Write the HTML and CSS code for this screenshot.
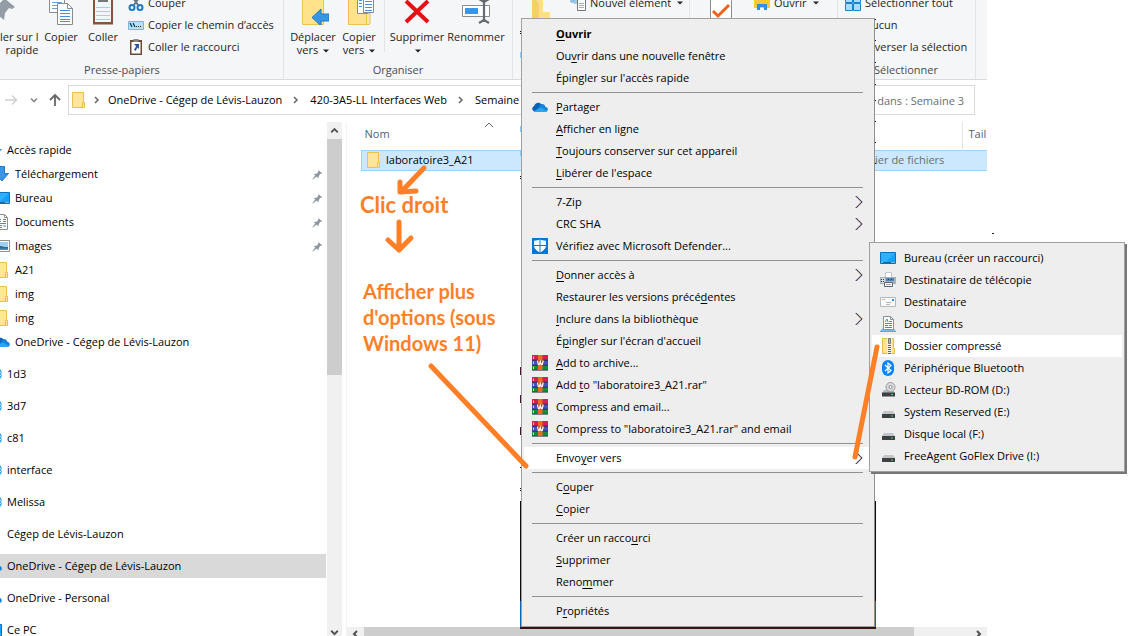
FILE: index.html
```html
<!DOCTYPE html>
<html lang="fr">
<head>
<meta charset="utf-8">
<title>Semaine 3</title>
<link rel="stylesheet" href="styles.css">
</head>
<body>
<svg class="defs" aria-hidden="true">
  <symbol id="folder" viewBox="0 0 16 16"><path d="M1.500.5h11v10h1v5h-12z" fill="#ffe69a" stroke="#ecc14a"/><path d="M11.500 15v-4.500h2V15.500" fill="#ffe9a8" stroke="#ecc14a"/></symbol>
  <symbol id="pin" viewBox="0 0 12 12"><path d="M7 1l4 3.500-1 1-1-.2L7.500 7.500 7 10 5 8.300 1 11.500.5 11 3.500 7.200 2 5.500l3-.4 2-2z" fill="#8e979f"/></symbol>
  <symbol id="cloud" viewBox="0 0 16 16"><path d="M3 12.500C0 12.500-.8 8.500 2 7.300 3 3.500 7 2.500 9.500 5.200L13 8l-3 5z" fill="#0f5fba"/><path d="M9 5c2.500-.5 4 1 4.300 2.800 3.300.6 3.400 4.700 0 5.200H3z" fill="#1484d8"/><path d="M2 12l7-3.500 6 3.500c-.5.700-1 1-2 1H3.500c-.7 0-1.200-.3-1.500-1z" fill="#2aa6ee"/></symbol>
  <symbol id="desktop" viewBox="0 0 16 16"><path d="M.5 2.500h15v11H.5z" fill="#16a1f8" stroke="#0d6fb5"/><path d="M1 3h14L5 13H1z" fill="#2db0ff"/><path d="M1 12.500h14" stroke="#0a6aa9"/><path d="M1.500 12.500h1M11.500 12.500h1M13.500 12.500h1" stroke="#fff"/></symbol>
  <symbol id="doc" viewBox="0 0 16 16"><path d="M2.500.5h8l3 3v12h-11z" fill="#fff" stroke="#8a9196"/><path d="M10.500.5v3h3" fill="none" stroke="#8a9196"/><path d="M4 5.500h3M9 5.500h3M4 7.500h3M9 7.500h3M4 9.500h8M4 11.500h4M9 12h3M4 13.500h4" stroke="#3d8fd0"/></symbol>
  <symbol id="picture" viewBox="0 0 16 16"><path d="M.5 2.500h15v11H.5z" fill="#fff" stroke="#8a9196"/><path d="M2 4h12v8H2z" fill="#9dd0f3"/><path d="M2 8c3-1 7 1 12 1v3H2z" fill="#2c6a86"/><path d="M2 10.500h12V12H2z" fill="#3f8ed0"/></symbol>
  <symbol id="down" viewBox="0 0 16 16"><path d="M5.500.5h5v7h4L8 15 1.500 7.500h4z" fill="#3a95e4" stroke="#2079c8"/></symbol>
  <symbol id="chev" viewBox="0 0 8 14"><path d="M.5 1l6 6-6 6" fill="none" stroke="#b0603c" stroke-width="1"/><path d="M1.200 1l6 6-6 6" fill="none" stroke="#24386e" stroke-width="1"/></symbol>
  <symbol id="crumb" viewBox="0 0 6 8"><path d="M1 1l3 3-3 3" fill="none" stroke="#6b6b6b" stroke-width="1.600"/></symbol>
  <symbol id="caret" viewBox="0 0 6 4"><path d="M0 .5h6L3 3.500z" fill="#222"/></symbol>
  <symbol id="rar" viewBox="0 0 16 16"><path d="M0 0h16v5H0z" fill="#cc2450"/><path d="M0 5h16v5H0z" fill="#4a4fb8"/><path d="M0 10h16v5H0z" fill="#188a3c"/><path d="M0 5.200h16M0 10.200h16M0 15.200h16" stroke="#232a3c" stroke-width=".8"/><path d="M1.500 1.500v2.500M1.500 6.500v2.500M1.500 11.500v2.500" stroke="#f7e31c"/><path d="M6 0h4.500v15H6z" fill="#ee6a1c"/><path d="M5.500 5.500l.8 4h1l1-3 1 3h1l.9-4" fill="#a83a16" stroke="#fff" stroke-width="1.200"/></symbol>
  <symbol id="shield" viewBox="0 0 16 16"><path d="M0 0h16v16H0z" fill="#0078d7"/><path d="M8 1.200l1 .8 5 .8v4.700c0 3-3 5.500-6 7-3-1.500-6-4-6-7V2.800L7 2z" fill="#fff"/><path d="M8 1v14M2 7.500h12" stroke="#0078d7"/></symbol>
  <symbol id="fax" viewBox="0 0 16 16"><path d="M5.500.5h6v5h-6z" fill="#fff" stroke="#c3c7cb"/><path d="M0 5h16v7H0z" fill="#a9b1b8"/><path d="M1 6h4v5H1z" fill="#d8dde2"/><path d="M6 6h8v3H6z" fill="#4a86bf"/><path d="M1 7.500h3M1 9.500h3M8 7.500h1M11 7.500h1" stroke="#313a44" stroke-dasharray="1 1"/><path d="M4.500 10.500h8v4h-8z" fill="#fff" stroke="#5c656d"/><path d="M6 12.500h5" stroke="#9aa2aa"/></symbol>
  <symbol id="mail" viewBox="0 0 16 16"><path d="M.5 3.500h15v9H.5z" fill="#fafafa" stroke="#b6b9bc"/><path d="M2 5.500h3M6 8.500h5M6 10.500h4" stroke="#b6b9bc"/><path d="M12 5h2v2h-2z" fill="#2e8fe0"/></symbol>
  <symbol id="docs2" viewBox="0 0 16 16"><path d="M0 15.500l2-3h12l2 3z" fill="#6fc3f2"/><path d="M3.500.5h7l3 3v10h-10z" fill="#fff" stroke="#8a9196"/><path d="M10.500.5v3h3" fill="none" stroke="#8a9196"/><path d="M5 6l2-3 1 3M9 5.500h3M5 7.500h7M5 9.500h3M9 9.500h3M5 11.500h7" fill="none" stroke="#3d8fd0"/><path d="M0 15.500h16" stroke="#4aaee8"/></symbol>
  <symbol id="zip" viewBox="0 0 16 16"><path d="M2.500.5h11v10h1v5h-12z" fill="#ffe48c" stroke="#e8bd3e"/><path d="M7 0h5v16H7z" fill="#f3eede"/><path d="M9.500 7v9" stroke="#666" stroke-width="3" stroke-dasharray="1 1"/><path d="M8.500.5h2v5h-2z" fill="#bbb" stroke="#777"/></symbol>
  <symbol id="bt" viewBox="0 0 16 16"><rect x="2" width="12" height="16" rx="6" fill="#0a84f5"/><path d="M5 5l6 5.500L8 13V3l3 2.500L5 11" fill="none" stroke="#fff" stroke-width="1.200"/></symbol>
  <symbol id="drive" viewBox="0 0 16 16"><path d="M4 7h9l2 3H2z" fill="#c3c6c8"/><path d="M2 10h13v4H2z" fill="#3c4043"/><path d="M11 12h2" stroke="#3fe05a"/></symbol>
  <symbol id="bdrom" viewBox="0 0 16 16"><path d="M4 8h9l2 3H2z" fill="#b3b7ba"/><circle cx="10.500" cy="5" r="4.500" fill="#d8dadc" stroke="#9a9ea1"/><circle cx="10.500" cy="5" r="1.500" fill="#fff" stroke="#85898c"/><path d="M2 10.500h13v4H2z" fill="#3c4043"/><path d="M11 12.500h2" stroke="#3fe05a"/></symbol>
  <symbol id="bubble" viewBox="0 0 16 16"><circle cx="8" cy="8" r="8" fill="#32a6ee"/><path d="M14 6l2 2-2 2" fill="none" stroke="#bfe3fa"/></symbol>
</svg>

<main class="explorer">
  <header class="ribbon">
    <section class="group clipboard">
      <div class="tools">
        <button class="big pinned"><svg viewBox="0 0 32 32"><path d="M20 5l11 9-3 2-3-1-4 5-1 7-6-5-7 5 5-8-6-6 8-1 5-5z" fill="#949da5"/></svg><span>ler sur l<br>rapide</span></button>
        <button class="big copy"><svg viewBox="0 0 32 32"><path d="M4.500-3.500h10l5 5v18h-15z" fill="#fff" stroke="#8b8b8b"/><path d="M7 9.500h10M7 12.500h10M7 15.500h10" stroke="#66a3e0"/><path d="M12.500 10.500h10l5 5v16h-15z" fill="#fff" stroke="#8b8b8b"/><path d="M22.500 10.500v5h5" fill="none" stroke="#8b8b8b"/><path d="M15 17.500h10M15 20.500h10M15 23.500h10M15 26.500h10M15 28.500h10" stroke="#4590de"/></svg><span>Copier</span></button>
        <button class="big paste"><svg viewBox="0 0 32 32"><path d="M6 3h20v28.500H6z" fill="#81563c"/><path d="M8 6h16v23H8z" fill="#eef7fb"/><path d="M11 3h10v6H11z" fill="#777"/><path d="M9 14.500h14M9 18.500h14M9 22.500h14M9 26.500h14" stroke="#9bd2ed"/></svg><span>Coller</span></button>
        <div class="rows">
          <button class="small"><svg viewBox="0 0 16 16"><path d="M3 0l7 10M13 0L6 10" stroke="#6d7780" stroke-width="2"/><circle cx="4" cy="12.500" r="2.500" fill="none" stroke="#1d79c4" stroke-width="2"/><circle cx="12" cy="12.500" r="2.500" fill="none" stroke="#1d79c4" stroke-width="2"/></svg>Couper</button>
          <button class="small"><svg viewBox="0 0 16 16"><path d="M.5 4.500h15v8H.5z" fill="#b6dff8" stroke="#7bb7de"/><path d="M2 6l2 4M5 6l2 4M8 9.500h1M10 9.500h1M12 9.500h1" stroke="#20303c" stroke-width="1.200"/></svg>Copier le chemin d’accès</button>
          <button class="small"><svg viewBox="0 0 16 16"><path d="M2 1h12v15H2z" fill="#6b4a36"/><path d="M3.500 3h9v11.500h-9z" fill="#fff"/><path d="M5.500 0h5v3h-5z" fill="#888"/><path d="M6 5h5v5L9.500 8.500 7.500 12 6 10.500l2.200-3.300z" fill="#27549b"/></svg>Coller le raccourci</button>
        </div>
      </div>
      <h2>Presse-papiers</h2>
    </section>
    <section class="group organise">
      <div class="tools">
        <button class="big move"><svg viewBox="0 0 32 32"><path d="M5.500 0h21v31.500h-21z" fill="#ffe28a" stroke="#eac250"/><path d="M32 21v7h-8v5l-9-8.500 9-8.500v5z" fill="#3796e6" stroke="#1f79c5"/></svg><span>Déplacer<br>vers <svg class="caret"><use href="#caret"/></svg></span></button>
        <button class="big copyto"><svg viewBox="0 0 32 32"><path d="M5.500 0h21v31.500h-21z" fill="#ffe28a" stroke="#eac250"/><path d="M23.500 31V20.500h3.500V31" fill="#ffe9a8" stroke="#eac250"/><path d="M14.500 3.500h10v17h-10z" fill="#fff" stroke="#8b8b8b"/><path d="M20.500 5.500h10v14h-10z" fill="#fff" stroke="#8b8b8b"/><path d="M16 7.500h3M16 10.500h3M16 13.500h3M22 8.500h7M22 11.500h7M22 14.500h7M22 17.500h7" stroke="#4590de"/></svg><span>Copier<br>vers <svg class="caret"><use href="#caret"/></svg></span></button>
        <i class="divider"></i>
        <button class="big remove"><svg viewBox="0 0 32 32"><path d="M5 8l22 21M27 8L5 29" stroke="#e60f14" stroke-width="4"/></svg><span>Supprimer<br><svg class="caret"><use href="#caret"/></svg></span></button>
        <button class="big rename"><svg viewBox="0 0 32 32"><path d="M2.500 12.500h27v11h-27z" fill="#fff" stroke="#878d93"/><path d="M5 15h13v6H5z" fill="#3796e6"/><path d="M24 7v22M19 30l5-3 5 3M19 6l5 3 5-3" fill="none" stroke="#666b70" stroke-width="2.200"/></svg><span>Renommer</span></button>
      </div>
      <h2>Organiser</h2>
    </section>
    <section class="group create">
      <div class="tools">
        <button class="big" aria-label="Nouveau dossier"><svg viewBox="0 0 32 32"><path d="M7 0h11v19h7v13H7z" fill="#ffdf86"/><path d="M7 0l7 12v20l-7-2z" fill="#f6cf67"/></svg></button>
        <div class="rows"><button class="small"><svg viewBox="0 0 16 16"><path d="M1 3v4h3M4 8h3M3 3v3h4" fill="none" stroke="#4a9ad4"/><path d="M7.500 3.500h8v12h-8z" fill="#fff" stroke="#777"/><path d="M9 8.500h5M9 10.500h5M9 12.500h5" stroke="#f09a6b"/></svg>Nouvel élément <svg class="caret"><use href="#caret"/></svg></button></div>
      </div>
    </section>
    <section class="group open">
      <div class="tools">
        <button class="big" aria-label="Propriétés"><svg viewBox="0 0 32 32"><path d="M5.500 2.500h16l5 5v24h-21z" fill="#fff" stroke="#8b8b8b"/><path d="M8 18l5 5 11-11" fill="none" stroke="#f0621c" stroke-width="3"/></svg></button>
        <div class="rows"><button class="small"><svg viewBox="0 0 16 16"><path d="M0 2h16v11H0z" fill="#fcc835"/><path d="M3 15V9h10v6h-3v-3H6v3z" fill="#2c8fe0"/></svg>Ouvrir <svg class="caret"><use href="#caret"/></svg></button></div>
      </div>
    </section>
    <section class="group select">
      <div class="tools">
        <div class="rows">
          <button class="small"><svg viewBox="0 0 16 16"><path d="M.5.500h7v7h-7zM8.500.500h7v7h-7zM.5 8.500h7v7h-7zM8.500 8.500h7v7h-7z" fill="#a9dbfa" stroke="#1583d0"/></svg>Sélectionner tout</button>
          <button class="small"><svg></svg>Aucun</button>
          <button class="small"><svg></svg>Inverser la sélection</button>
        </div>
      </div>
      <h2>Sélectionner</h2>
    </section>
  </header>

  <div class="location">
    <button class="navbtn fwd" aria-label="Suivant"><svg viewBox="0 0 16 16"><path d="M2 8h11M9 3.500L13.500 8 9 12.500" fill="none" stroke="#d0d0d0" stroke-width="1.500"/></svg></button>
    <button class="navbtn recent" aria-label="Récents"><svg viewBox="0 0 16 16"><path d="M5 6.500l3 3 3-3" fill="none" stroke="#888" stroke-width="1.600"/></svg></button>
    <button class="navbtn up" aria-label="Monter"><svg viewBox="0 0 16 16"><path d="M8 14V3M3 8l5-5 5 5" fill="none" stroke="#666" stroke-width="1.800"/></svg></button>
    <nav class="address" aria-label="Adresse">
      <svg class="icon"><use href="#folder"/></svg>
      <svg class="crumb first"><use href="#crumb"/></svg><a href="#">OneDrive - Cégep de Lévis-Lauzon</a>
      <svg class="crumb"><use href="#crumb"/></svg><a href="#">420-3A5-LL Interfaces Web</a>
      <svg class="crumb"><use href="#crumb"/></svg><a href="#">Semaine 3</a>
    </nav>
    <input class="search" type="text" aria-label="Rechercher" value="Rechercher dans : Semaine 3">
  </div>

  <div class="panes">
    <aside class="sidebar">
      <ul class="tree">
        <li class="root"><svg class="icon"><path d="M10 7h6l-4 5z" fill="#3a95e4"/></svg>Accès rapide</li>
        <li><svg class="icon"><use href="#down"/></svg>Téléchargement<svg class="pin"><use href="#pin"/></svg></li>
        <li><svg class="icon"><use href="#desktop"/></svg>Bureau<svg class="pin"><use href="#pin"/></svg></li>
        <li><svg class="icon"><use href="#doc"/></svg>Documents<svg class="pin"><use href="#pin"/></svg></li>
        <li><svg class="icon"><use href="#picture"/></svg>Images<svg class="pin"><use href="#pin"/></svg></li>
        <li><svg class="icon"><use href="#folder"/></svg>A21</li>
        <li><svg class="icon"><use href="#folder"/></svg>img</li>
        <li><svg class="icon"><use href="#folder"/></svg>img</li>
        <li><svg class="icon"><use href="#cloud"/></svg>OneDrive - Cégep de Lévis-Lauzon</li>
        <li class="root spaced"><svg class="icon"><use href="#bubble"/></svg>1d3</li>
        <li class="root spaced"><svg class="icon"><use href="#bubble"/></svg>3d7</li>
        <li class="root spaced"><svg class="icon"><use href="#bubble"/></svg>c81</li>
        <li class="root spaced"><svg class="icon"><use href="#bubble"/></svg>interface</li>
        <li class="root spaced"><svg class="icon"><use href="#bubble"/></svg>Melissa</li>
        <li class="root spaced"><svg class="icon"></svg>Cégep de Lévis-Lauzon</li>
        <li class="root spaced selected"><svg class="icon"><use href="#cloud"/></svg>OneDrive - Cégep de Lévis-Lauzon</li>
        <li class="root spaced"><svg class="icon"><use href="#cloud"/></svg>OneDrive - Personal</li>
        <li class="root spaced"><svg class="icon"><use href="#desktop"/></svg>Ce PC</li>
      </ul>
      <div class="vscroll">
        <svg viewBox="0 0 16 17"><path d="M4.500 10.500L8 7l3.500 3.500" fill="none" stroke="#505050" stroke-width="2"/></svg>
        <i class="vthumb"></i>
        <svg class="last" viewBox="0 0 16 17"><path d="M4.500 12L8 15.500l3.500-3.500" fill="none" stroke="#505050" stroke-width="2"/></svg>
      </div>
    </aside>
    <section class="files">
      <svg class="sort" viewBox="0 0 10 6"><path d="M1 5l4-4 4 4" fill="none" stroke="#666"/></svg>
      <table>
        <thead><tr><th class="name">Nom</th><th class="type"></th><th class="size">Tail</th></tr></thead>
        <tbody><tr><td class="name"><span class="file"><svg class="icon"><use href="#folder"/></svg>laboratoire3_A21</span></td><td class="type">Dossier de fichiers</td><td class="size"></td></tr></tbody>
      </table>
      <div class="hscroll">
        <svg viewBox="0 0 17 9"><path d="M10 4L7 7l3 3" fill="none" stroke="#505050" stroke-width="2"/></svg>
        <i class="hthumb"></i>
        <svg class="last" viewBox="0 0 17 9"><path d="M7 4l3 3-3 3" fill="none" stroke="#505050" stroke-width="2"/></svg>
      </div>
    </section>
  </div>
</main>

<div class="behind"></div>

<ul class="menu context" role="menu">
  <li><button role="menuitem"><i></i><b><u>O</u>uvrir</b></button></li>
  <li><button role="menuitem"><i></i><span>Ou<u>v</u>rir dans une nouvelle fenêtre</span></button></li>
  <li><button role="menuitem"><i></i><span>Épingler sur l'accès rapide</span></button></li>
  <li class="rule"></li>
  <li><button role="menuitem"><svg class="icon"><use href="#cloud"/></svg><span><u>P</u>artager</span></button></li>
  <li><button role="menuitem"><i></i><span><u>A</u>fficher en ligne</span></button></li>
  <li><button role="menuitem"><i></i><span><u>T</u>oujours conserver sur cet appareil</span></button></li>
  <li><button role="menuitem"><i></i><span><u>L</u>ibérer de l'espace</span></button></li>
  <li class="rule"></li>
  <li><button role="menuitem"><i></i><span>7-Zip</span><svg class="chev"><use href="#chev"/></svg></button></li>
  <li><button role="menuitem"><i></i><span>CRC SHA</span><svg class="chev"><use href="#chev"/></svg></button></li>
  <li><button role="menuitem"><svg class="icon"><use href="#shield"/></svg><span>Vérifiez avec Microsoft Defender...</span></button></li>
  <li class="rule"></li>
  <li><button role="menuitem"><i></i><span><u>D</u>onner accès à</span><svg class="chev"><use href="#chev"/></svg></button></li>
  <li><button role="menuitem"><i></i><span>Restaurer les versions précé<u>d</u>entes</span></button></li>
  <li><button role="menuitem"><i></i><span><u>I</u>nclure dans la bibliothèque</span><svg class="chev"><use href="#chev"/></svg></button></li>
  <li><button role="menuitem"><i></i><span>É<u>p</u>ingler sur l'écran d'accueil</span></button></li>
  <li><button role="menuitem"><svg class="icon"><use href="#rar"/></svg><span><u>A</u>dd to archive...</span></button></li>
  <li><button role="menuitem"><svg class="icon"><use href="#rar"/></svg><span>Add <u>t</u>o "laboratoire3_A21.rar"</span></button></li>
  <li><button role="menuitem"><svg class="icon"><use href="#rar"/></svg><span>Compress and email...</span></button></li>
  <li><button role="menuitem"><svg class="icon"><use href="#rar"/></svg><span>Compress to "laboratoire3_A21.rar" and email</span></button></li>
  <li class="rule"></li>
  <li><button role="menuitem" class="active"><i></i><span>Envo<u>y</u>er vers</span><svg class="chev"><use href="#chev"/></svg></button></li>
  <li class="rule"></li>
  <li><button role="menuitem"><i></i><span>C<u>o</u>uper</span></button></li>
  <li><button role="menuitem"><i></i><span><u>C</u>opier</span></button></li>
  <li class="rule"></li>
  <li><button role="menuitem"><i></i><span>Créer un racco<u>u</u>rci</span></button></li>
  <li><button role="menuitem"><i></i><span><u>S</u>upprimer</span></button></li>
  <li><button role="menuitem"><i></i><span>Reno<u>m</u>mer</span></button></li>
  <li class="rule"></li>
  <li><button role="menuitem"><i></i><span>P<u>r</u>opriétés</span></button></li>
</ul>

<ul class="menu sendto" role="menu">
  <li><button role="menuitem"><svg class="icon"><use href="#desktop"/></svg><span>Bureau (créer un raccourci)</span></button></li>
  <li><button role="menuitem"><svg class="icon"><use href="#fax"/></svg><span>Destinataire de télécopie</span></button></li>
  <li><button role="menuitem"><svg class="icon"><use href="#mail"/></svg><span>Destinataire</span></button></li>
  <li><button role="menuitem"><svg class="icon"><use href="#docs2"/></svg><span>Documents</span></button></li>
  <li><button role="menuitem" class="active"><svg class="icon"><use href="#zip"/></svg><span>Dossier compressé</span></button></li>
  <li><button role="menuitem"><svg class="icon"><use href="#bt"/></svg><span>Périphérique Bluetooth</span></button></li>
  <li><button role="menuitem"><svg class="icon"><use href="#bdrom"/></svg><span>Lecteur BD-ROM (D:)</span></button></li>
  <li><button role="menuitem"><svg class="icon"><use href="#drive"/></svg><span>System Reserved (E:)</span></button></li>
  <li><button role="menuitem"><svg class="icon"><use href="#drive"/></svg><span>Disque local (F:)</span></button></li>
  <li><button role="menuitem"><svg class="icon"><use href="#drive"/></svg><span>FreeAgent GoFlex Drive (I:)</span></button></li>
</ul>

<p class="note click">Clic droit</p>
<p class="note more">Afficher plus<br>d'options (sous<br>Windows 11)</p>
<svg class="ink" viewBox="0 0 1136 636" aria-hidden="true">
  <g fill="none" stroke="#ff7f27" stroke-width="5" stroke-linecap="round" stroke-linejoin="round">
    <path d="M424 168l-23 24M400 182v10l16-1"/>
    <path d="M399 222v28M388 240l11 10 12-12"/>
    <path d="M431 366l95 100"/>
    <path d="M877 347l-22 110"/>
  </g>
  <path d="M992 233h2v1h-2z" fill="#222"/>
  <path d="M520 31.500h1M520 33.500h1M520 176.500h1M520 178.500h1M520 488.500h1M520 490.500h1M520 467.500h1M875 19.500h1M875 40.500h1M875 62.500h1M875 84.500h1M875 100.500h1M875 121.500h1M875 142.500h1M875 163.500h1" stroke="#111"/>
  <path d="M520.500 367v8M520.500 395v8M520.500 427v8" stroke="#4c1236"/>
  <path d="M520.500 52v6M520.500 126v6M520.500 150v6" stroke="#86cdf8"/>
</svg>
</body>
</html>
```

FILE: styles.css
```css
* { box-sizing: border-box; }
body {
  margin: 0;
  height: 100vh;
  overflow: hidden;
  position: relative;
  padding-right: 149px;
  background: #fff;
  color: #000;
  font: 11px/14px "Open Sans", sans-serif;
}
ul { list-style: none; margin: 0; padding: 0; }
h2, p { margin: 0; font-weight: 400; }
button { border: 0; padding: 0; background: none; color: inherit; font: inherit; }
.defs { position: absolute; width: 0; height: 0; }
.icon { width: 16px; height: 16px; flex: none; }
.explorer { height: 100%; display: flex; flex-direction: column; }

/* Ribbon */
.ribbon {
  flex: none;
  height: 80px;
  display: flex;
  align-items: flex-end;
  overflow: hidden;
  background: #f5f6f7;
  border-bottom: 1px solid #dadbdc;
  color: #1e1e1e;
}
.group { flex: none; height: 87px; border-right: 1px solid #e2e3e4; white-space: nowrap; }
.group h2 { font-size: 11px; line-height: 18px; text-align: center; color: #4c4c4c; }
.tools { display: flex; height: 69px; }
.clipboard { width: 284px; padding-right: 38px; }
.clipboard h2 { width: 244px; }
.organise { width: 229px; }
.create { width: 177px; padding-left: 10px; }
.open { width: 148px; padding-left: 13px; }
.select { width: 138px; padding-left: 7px; }
.select h2 { padding-right: 8px; }
.big { flex: none; display: flex; flex-direction: column; align-items: center; gap: 5px; width: 36px; padding-top: 1px; line-height: 13px; }
.big > svg { width: 32px; height: 32px; overflow: hidden; }
.big.pinned { width: 40px; align-items: flex-start; text-align: right; }
.pinned svg { margin-left: -16px; }
.big.copy { width: 42px; }
.big.paste { width: 42px; }
.clipboard .rows { margin-left: 4px; }
.big.move { width: 58px; }
.big.copyto { width: 34px; }
.big.remove { width: 64px; }
.big.rename { width: 54px; }
.divider { flex: none; width: 1px; height: 60px; margin-left: 8px; background: #e2e3e4; }
.small { display: flex; align-items: center; gap: 4px; height: 22px; }
.small > svg { width: 16px; height: 16px; }
.create .rows { margin-left: 11px; }
.open .rows { margin-left: 15px; }
svg.caret { width: 6px; height: 4px; margin-left: 2px; vertical-align: middle; }
.small > svg.caret { width: 6px; height: 4px; }

/* Location bar */
.location { flex: none; display: flex; align-items: center; height: 42px; padding: 5px 12px 7px 3px; }
.navbtn { width: 16px; height: 16px; }
.navbtn svg { display: block; width: 16px; height: 16px; }
.recent { margin-left: 7px; }
.up { margin-left: 5px; margin-right: 5px; }
.address { flex: 1; display: flex; align-items: center; height: 30px; border: 1px solid #d9d9d9; padding-left: 2px; white-space: nowrap; overflow: hidden; }
.address a { color: #000; text-decoration: none; }
.crumb { width: 6px; height: 8px; margin: 0 11px; flex: none; }
.crumb.first { margin: 0 8px 0 7px; }
.search { width: 200px; height: 30px; margin-left: 12px; border: 1px solid #d9d9d9; padding: 0 10px; text-align: right; font: inherit; color: #6d6d6d; background: #fff; }

/* Panes */
.panes { flex: 1; min-height: 0; display: flex; }
.sidebar { flex: none; width: 347px; display: flex; border-right: 1px solid #f3f3f3; }
.tree { width: 326px; margin-right: 1px; padding-top: 16px; overflow: hidden; }
.tree li { display: flex; align-items: center; gap: 5px; height: 24px; padding-right: 3px; }
.tree .icon { margin-left: -6px; }
.tree .root .icon { margin-left: -14px; }
.tree .spaced { margin-top: 8px; }
.tree .selected { background: #d9d9d9; }
.pin { width: 11px; height: 11px; margin-left: auto; }
.vscroll { width: 15px; display: flex; flex-direction: column; background: #f0f0f0; }
.vscroll svg { width: 15px; height: 17px; }
.vthumb { height: 236px; background: #cdcdcd; }
.last { margin-top: auto; }
.files { flex: 1; min-width: 0; display: flex; flex-direction: column; position: relative; }
.sort { position: absolute; left: 137px; top: 0; width: 10px; height: 6px; }
table { width: calc(100% - 14px); margin-left: 14px; table-layout: fixed; border-collapse: collapse; }
th, td { padding: 0; text-align: left; font-weight: 400; white-space: nowrap; overflow: hidden; }
th { height: 28px; padding-bottom: 3px; color: #4c607a; }
thead .name { padding-left: 3px; }
thead .size { padding-left: 6px; border-left: 1px solid #e5e5e5; }
th.type { width: 124px; }
th.size { width: 25px; }
tbody tr { height: 20px; background: #cce8ff; border: 1px solid #99d1ff; border-right: 0; }
.file { display: flex; align-items: center; gap: 4px; padding-left: 4px; }
td.type { padding-left: 12px; color: #6d6d6d; }
.hscroll { display: flex; height: 9px; margin-top: auto; background: #f0f0f0; }
.hscroll svg { width: 17px; height: 9px; flex: none; }
.hthumb { width: 86%; background: #cdcdcd; }
.hscroll .last { margin: 0 0 0 auto; }

/* Menus */
.behind { position: absolute; left: 520px; top: 501px; width: 356px; height: 128px; background: linear-gradient(#0b0b0b 100px, #0a66b0 100px, #0a66b0 126px, #361414 126px); }
.menu { position: absolute; background: #eee; border: 1px solid #a0a0a0; padding: 4px 2px; }
.context { left: 521px; top: 18px; width: 354px; border-right-color: #8f8f8f; }
.sendto { left: 869px; top: 242px; width: 256px; box-shadow: 2px 2px 0 #777; }
.menu button { display: flex; align-items: center; gap: 8px; width: 100%; height: 22px; padding: 0 9px 0 8px; text-align: left; white-space: nowrap; }
.menu button > i { width: 16px; flex: none; }
.menu .active { background: #fff; }
.menu u { text-underline-offset: 2px; }
.menu .chev { width: 8px; height: 14px; margin-left: auto; }
.rule { height: 1px; margin: 3px 9px 3px 8px; background: #919191; }

/* Annotations */
.note { position: absolute; color: #ff7f27; font-family: Lato, sans-serif; font-weight: 700; white-space: nowrap; line-height: 26px; }
.click { left: 360px; top: 192px; font-size: 22px; }
.more { left: 363px; top: 278px; font-size: 20px; }
.ink { position: absolute; left: 0; top: 0; width: 1136px; height: 636px; pointer-events: none; }
```
